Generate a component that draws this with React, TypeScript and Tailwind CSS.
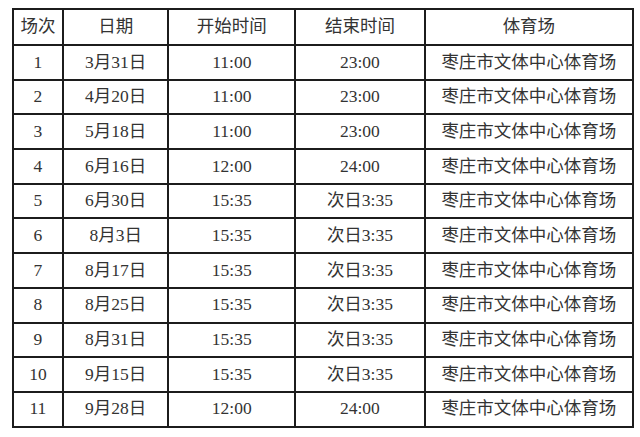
const rows: [string, string, string, string][] = [
  ['1', '3月31日', '11:00', '23:00'],
  ['2', '4月20日', '11:00', '23:00'],
  ['3', '5月18日', '11:00', '23:00'],
  ['4', '6月16日', '12:00', '24:00'],
  ['5', '6月30日', '15:35', '次日3:35'],
  ['6', '8月3日', '15:35', '次日3:35'],
  ['7', '8月17日', '15:35', '次日3:35'],
  ['8', '8月25日', '15:35', '次日3:35'],
  ['9', '8月31日', '15:35', '次日3:35'],
  ['10', '9月15日', '15:35', '次日3:35'],
  ['11', '9月28日', '12:00', '24:00'],
]

const cell = 'border-2 border-[#1c1c1c] text-center align-middle p-0'

export default function App() {
  return (
    <div className="w-[640px] h-[437px] bg-white pt-[8px] pl-[12px]">
      <table
        className="border-collapse w-[622px] text-[17.5px] text-[#333] leading-none"
        style={{ fontFamily: '"Liberation Serif", "Noto Sans CJK SC", serif' }}
      >
        <colgroup>
          <col className="w-[50px]" />
          <col className="w-[106px]" />
          <col className="w-[127px]" />
          <col className="w-[130px]" />
          <col className="w-[209px]" />
        </colgroup>
        <thead>
          <tr className="h-[36px]">
            {['场次', '日期', '开始时间', '结束时间', '体育场'].map((h) => (
              <th key={h} className={`${cell} font-normal`}>
                {h}
              </th>
            ))}
          </tr>
        </thead>
        <tbody>
          {rows.map((r) => (
            <tr key={r[0]} className="h-[34.7px]">
              <td className={cell}>{r[0]}</td>
              <td className={cell}>{r[1]}</td>
              <td className={cell}>{r[2]}</td>
              <td className={cell}>{r[3]}</td>
              <td className={cell}>枣庄市文体中心体育场</td>
            </tr>
          ))}
        </tbody>
      </table>
    </div>
  )
}
